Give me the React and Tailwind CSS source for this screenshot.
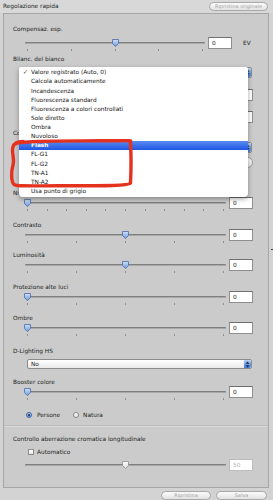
import React from 'react';

const wbItems = [
    'Valore registrato (Auto, 0)',
    'Calcola automaticamente',
    'Incandescenza',
    'Fluorescenza standard',
    'Fluorescenza a colori controllati',
    'Sole diretto',
    'Ombra',
    'Nuvoloso',
    'Flash',
    'FL-G1',
    'FL-G2',
    'TN-A1',
    'TN-A2',
    'Usa punto di grigio',
];

const Label = ({ text, className = '' }) => (
    <div className={`ml-[9px] h-[8px] leading-[8px] whitespace-nowrap ${className}`}>{text}</div>
);

const Thumb = ({ disabled }) => (
    <svg width="7" height="8" viewBox="0 0 7 8" className="block">
        <defs>
            <linearGradient id={disabled ? 'thd' : 'thb'} x1="0" y1="0" x2="0" y2="1">
                <stop offset="0" stopColor={disabled ? '#ffffff' : '#cfe0f7'} />
                <stop offset="1" stopColor={disabled ? '#d8d8d8' : '#6d9be0'} />
            </linearGradient>
        </defs>
        <path
            d="M0.5 0.5 H6.5 V4.6 L3.5 7.5 L0.5 4.6 Z"
            fill={`url(#${disabled ? 'thd' : 'thb'})`}
            stroke={disabled ? '#8f8f8f' : '#4669a8'}
            strokeWidth="0.8"
        />
    </svg>
);

const Slider = ({ pos, ticks = 5, trackClass = 'w-[201px]', value = '0', disabled = false, suffix }) => (
    <div className="flex items-start">
        <div className={`ml-[21px] flex flex-col ${trackClass}`}>
            <div className="relative h-[12px]">
                <div className="absolute left-0 right-0 top-[5px] h-[2px] rounded-full bg-[#7f7f7f] border-b border-[#a9a9a9]" />
                <div
                    className="absolute top-[2px]"
                    style={{ left: `calc(2px + ${pos} * (100% - 4px) - 3.5px)` }}
                >
                    <Thumb disabled={disabled} />
                </div>
            </div>
            {ticks > 0 && (
                <div className="flex justify-between px-[2px] h-[3px]">
                    {Array.from({ length: ticks }).map((_, i) => (
                        <div key={i} className="w-px h-[2px] bg-[#929292]" />
                    ))}
                </div>
            )}
        </div>
        <div
            className={`ml-[3px] h-[12px] w-[24px] bg-white border pl-[3px] leading-[11px] ${disabled ? 'border-[#bdbdbd] text-[#b4b4b4]' : 'border-[#8f8f8f] border-t-[#6f6f6f] text-[#222]'}`}
        >
            {value}
        </div>
        {suffix && <div className="ml-[11px] leading-[12px]">{suffix}</div>}
    </div>
);

const Arrows = ({ className = 'w-[7px]' }) => (
    <div className={`h-full rounded-r-[2px] bg-gradient-to-b from-[#b9d3f6] via-[#6f9fe6] to-[#3e78da] flex items-center justify-center ${className}`}>
        <svg width="5" height="7" viewBox="0 0 5 7">
            <path d="M2.5 0.5 L4.5 2.7 H0.5 Z M2.5 6.5 L4.5 4.3 H0.5 Z" fill="#1c2c48" />
        </svg>
    </div>
);

const Select = ({ text = '', className = 'h-[11px]' }) => (
    <div className={`ml-[23px] w-[225px] flex items-stretch border border-[#8c8c8c] rounded-[2px] bg-gradient-to-b from-white to-[#e9e9e9] ${className}`}>
        <div className="flex-1 pl-[3px] flex items-center">{text}</div>
        <Arrows className="w-[7px]" />
    </div>
);

const Pill = ({ text, className = '' }) => (
    <div className={`h-[9px] rounded-full border border-[#a9a9a9] bg-gradient-to-b from-[#fbfbfb] to-[#e2e2e2] flex items-center justify-center text-[5px] text-[#a3a3a3] ${className}`}>
        {text}
    </div>
);

const App = () => {
    return (
        <div className="relative w-[273px] h-[500px] overflow-hidden bg-[#d3d3d3] text-[#1f1f1f] text-[5.8px] [font-family:'DejaVu_Sans',sans-serif]">
            <div className="h-[13px] flex items-center justify-between pl-[3px] pr-[5px] bg-[#d8d8d8]">
                <div className="whitespace-nowrap">Regolazione rapida</div>
                <Pill text="Ripristina originale" className="w-[59px]" />
            </div>

            <div className="ml-[3px] w-[266px] h-[475px] border border-[#a6a6a6] bg-[#cbcbcb] flex flex-col">
                <Label text="Compensaz. esp." className="mt-[11px]" />
                <div className="mt-[4px]">
                    <Slider pos={0.5} trackClass="w-[180px]" suffix="EV" />
                </div>

                <Label text="Bilanc. del bianco" className="mt-[3px]" />
                {/* il contenuto sotto il menu aperto resta coperto */}
                <div className="mt-[4px]">
                    <Select />
                </div>
                <div className="mt-[11px]">
                    <Slider pos={0.5} />
                </div>
                <div className="mt-[7px]">
                    <Slider pos={0.5} />
                </div>

                <Label text="Controllo immagine" className="mt-[3px]" />
                <div className="mt-[5px]">
                    <Select />
                </div>
                <div className="mt-[4px] self-end mr-[15px]">
                    <div className="h-[11px] w-[48px] rounded-full border border-[#9a9a9a] bg-gradient-to-b from-white to-[#e4e4e4]" />
                </div>

                <Label text="Nitidezza" className="mt-[21px]" />
                <Slider pos={0} ticks={11} />

                <Label text="Contrasto" className="mt-[9px]" />
                <Slider pos={0.5} />

                <Label text="Luminosità" className="mt-[7px]" />
                <Slider pos={0.5} />

                <Label text="Protezione alte luci" className="mt-[9px]" />
                <Slider pos={0} />

                <Label text="Ombre" className="mt-[8px]" />
                <Slider pos={0} />

                <Label text="D-Lighting HS" className="mt-[10px]" />
                <div className="mt-[4px]">
                    <Select text="No" className="h-[10px]" />
                </div>

                <Label text="Booster colore" className="mt-[9px]" />
                <Slider pos={0} />

                <div className="mt-[10px] h-[8px] ml-[22px] flex items-center">
                    <div className="w-[6px] h-[6px] rounded-full border border-[#3d64a6] bg-gradient-to-b from-[#bcd4f5] to-[#5d8fdc] flex items-center justify-center">
                        <div className="w-[2px] h-[2px] rounded-full bg-[#13233f]" />
                    </div>
                    <div className="ml-[5px]">Persone</div>
                    <div className="ml-[13px] w-[6px] h-[6px] rounded-full border border-[#8a8a8a] bg-gradient-to-b from-white to-[#e2e2e2]" />
                    <div className="ml-[4px]">Natura</div>
                </div>

                <div className="mt-[6px] h-px bg-[#bdbdbd]" />
                <div className="h-px bg-[#d8d8d8]" />

                <Label text="Controllo aberrazione cromatica longitudinale" className="mt-[8px]" />
                <div className="mt-[5px] h-[8px] ml-[24px] flex items-center">
                    <div className="w-[6px] h-[6px] border border-[#8c8c8c] bg-gradient-to-b from-white to-[#e6e6e6]" />
                    <div className="ml-[3px]">Automatico</div>
                </div>
                <div className="mt-[3px]">
                    <Slider pos={0.5} ticks={0} value="50" disabled />
                </div>
            </div>

            <div className="mt-[3px] flex justify-end gap-[5px] pr-[6px]">
                <Pill text="Ripristina" className="w-[50px]" />
                <Pill text="Salva" className="w-[51px]" />
            </div>

            <div className="absolute right-0 top-[249px] w-[2px] h-px bg-[#444]" />

            {/* menu a tendina del bilanciamento del bianco, aperto sopra il pannello */}
            <div className="absolute left-[19px] top-[67px] w-[229px] h-[130px] bg-white rounded-b-[4px] rounded-t-[2px] shadow-[0_2px_5px_rgba(0,0,0,0.35)] pt-[1px] text-[#151515]">
                {wbItems.map((item, i) => (
                    <div
                        key={item}
                        className={`h-[9.15px] flex items-center whitespace-nowrap ${item === 'Flash' ? 'bg-gradient-to-b from-[#5a8af0] to-[#1f55e3] text-white font-bold' : ''}`}
                    >
                        <div className="w-[12px] pl-[4px]">{i === 0 ? '✓' : ''}</div>
                        <div>{item}</div>
                    </div>
                ))}
            </div>

            <svg className="absolute left-0 top-[134px]" width="145" height="60" viewBox="0 134 145 60">
                <path
                    d="M15 144 C20 140.5, 60 141, 100 140.8 S129 140, 130.5 143.5 C131.5 160, 131 173, 130.5 183 C129 186, 100 185.8, 60 185.8 S17 186.2, 14 184.5 C11 181, 11 172, 13 165 C15 158, 11 152, 13 147 C14 143, 17 141.5, 23 141.5"
                    fill="none"
                    stroke="#e4321f"
                    strokeWidth="3.4"
                    strokeLinecap="round"
                    strokeLinejoin="round"
                />
            </svg>
        </div>
    );
};

export default App;
